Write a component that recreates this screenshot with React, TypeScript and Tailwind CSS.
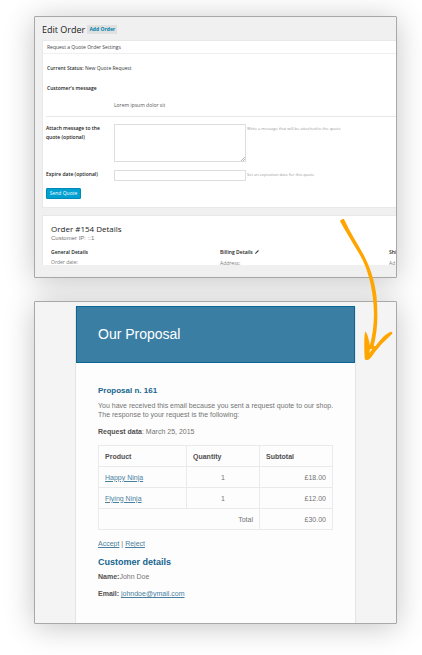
import type { ReactNode } from "react";

const card =
  "overflow-hidden rounded-[1px] border border-[#a8a8a8] shadow-[0_3px_30px_rgba(0,0,0,0.23)]";

function OrderForm() {
  return (
    <form className="border-y border-l border-[#e8e8e8] bg-white pb-2">
      <h2 className="border-b border-[#f0f0f0] pl-1 text-[5px] leading-[12px] text-[#444]">
        Request a Quote Order Settings
      </h2>
      <p className="mt-[9px] pl-1 text-[5px] leading-[10px] text-[#333]">
        <b className="font-semibold">Current Status:</b> New Quote Request
      </p>
      <h3 className="mt-[10px] pl-1 text-[5px] leading-[10px] font-semibold">Customer's message</h3>
      <p className="mt-[7px] pl-[71px] text-[5px] leading-[10px] text-[#555]">Lorem ipsum dolor sit</p>
      <hr className="mt-[6px] ml-[3px] border-[#e8e8e8]" />
      <div className="mt-[7px] flex items-start pl-[3px]">
        <label htmlFor="message" className="w-[68px] text-[5px] leading-[9px] font-semibold">
          Attach message to the
          <br />
          quote (optional)
        </label>
        <div className="relative">
          <textarea id="message" className="block h-[38px] w-[132px] resize-none border border-[#ddd] bg-white" />
          <svg viewBox="0 0 4 4" className="pointer-events-none absolute right-px bottom-px size-1">
            <path d="M0 4L4 0M2 4L4 2" stroke="#999" strokeWidth=".7" />
          </svg>
        </div>
        <span className="pl-px text-[4px] leading-[9px] text-[#999]">
          Write a message that will be attached to the quote
        </span>
      </div>
      <div className="mt-[8px] flex items-start pl-[3px]">
        <label htmlFor="expire" className="w-[68px] text-[5px] leading-[9px] font-semibold">
          Expire date (optional)
        </label>
        <input id="expire" type="text" className="block h-[11px] w-[132px] border border-[#ddd] bg-white text-[5px]" />
        <span className="pl-px text-[4px] leading-[10px] text-[#999]">
          Set an expiration date for this quote
        </span>
      </div>
      <button
        type="button"
        className="mt-[7px] ml-[3px] block h-[11px] w-[35px] rounded-[1px] border border-[#0089b3] bg-[#00a0d2] text-[5px] leading-[9px] text-white"
      >
        Send Quote
      </button>
    </form>
  );
}

function OrderCard() {
  return (
    <section className={`${card} bg-[#f0f0f0] pb-3 pl-[7px] font-['Open_Sans',sans-serif] text-[#222]`}>
      <header className="flex h-[23px] items-center gap-[2px] pt-[2px]">
        <h1 className="text-[9px] leading-[12px]">Edit Order</h1>
        <button type="button" className="h-[9px] w-[30px] bg-[#e0e0e0] text-[5px] leading-[9px] font-bold text-[#0083ab]">
          Add Order
        </button>
      </header>
      <OrderForm />
      <div className="mt-[7px] h-[50px] overflow-hidden border-t border-l border-[#e8e8e8] bg-white pl-[8px]">
        <h2 className="mt-[8px] text-[8px] leading-[10px]">Order #154 Details</h2>
        <p className="font-['Liberation_Sans',sans-serif] text-[6px] leading-[8px] text-[#777]">Customer IP: ::1</p>
        <div className="mt-[5px] grid grid-cols-[169px_169px_1fr] text-[5px] leading-[10px] whitespace-nowrap text-[#777]">
          <div>
            <h3 className="font-semibold text-[#222]">General Details</h3>
            <p>Order date:</p>
          </div>
          <div>
            <h3 className="flex items-center gap-[2px] font-semibold text-[#222]">
              Billing Details
              <svg viewBox="0 0 4 4" className="size-[4px]">
                <path d="M0 4L.4 2.8L3.1.1L3.9.9L1.2 3.6Z" fill="#444" />
              </svg>
            </h3>
            <p className="mt-px">Address:</p>
          </div>
          <div>
            <h3 className="font-semibold text-[#222]">Shi</h3>
            <p className="mt-px">Ad</p>
          </div>
        </div>
      </div>
    </section>
  );
}

function MailLink({ href, children }: { href: string; children: ReactNode }) {
  return (
    <a href={href} className="text-[#4b7f9f] underline">
      {children}
    </a>
  );
}

const items = [
  { name: "Happy Ninja", quantity: 1, subtotal: "£18.00" },
  { name: "Flying Ninja", quantity: 1, subtotal: "£12.00" },
];
const cell = "h-[21px] border border-[#eaeaea] px-[6px]";

function ProposalCard() {
  return (
    <section className={`${card} mt-[23px] bg-[#f4f4f4] pt-[4px] font-['Liberation_Sans',sans-serif]`}>
      <div className="mx-auto w-[281px] rounded-t-[2px] border-x border-[#e4e4e4] bg-[#fdfdfd]">
        <header className="flex h-[57px] items-center border border-[#086795] bg-[#3b7ea4] px-[21px] pb-px">
          <h1 className="text-[14px] leading-[18px] text-white">Our Proposal</h1>
        </header>
        <div className="px-[22px] pb-[25px] text-[7px] leading-[9px] text-[#747474]">
          <h2 className="mt-[23px] text-[8px] leading-[10px] font-bold text-[#16648f]">Proposal n. 161</h2>
          <p className="mt-[5px] whitespace-nowrap">
            You have received this email because you sent a request quote to our shop.
            <br />
            The response to your request is the following:
          </p>
          <p className="mt-[8px]">
            <b className="text-[#505050]">Request data</b>: March 25, 2015
          </p>
          <table className="mt-[9px] w-full table-fixed border-collapse">
            <colgroup>
              <col className="w-[88px]" />
              <col className="w-[73px]" />
              <col />
            </colgroup>
            <thead className="text-left text-[#505050]">
              <tr>
                <th className={cell}>Product</th>
                <th className={cell}>Quantity</th>
                <th className={cell}>Subtotal</th>
              </tr>
            </thead>
            <tbody>
              {items.map((item) => (
                <tr key={item.name}>
                  <td className={cell}>
                    <MailLink href="#product">{item.name}</MailLink>
                  </td>
                  <td className={`${cell} text-center`}>{item.quantity}</td>
                  <td className={`${cell} text-right`}>{item.subtotal}</td>
                </tr>
              ))}
              <tr>
                <td colSpan={2} className={`${cell} text-right`}>Total</td>
                <td className={`${cell} text-right`}>£30.00</td>
              </tr>
            </tbody>
          </table>
          <p className="mt-[9px]">
            <MailLink href="#accept">Accept</MailLink> | <MailLink href="#reject">Reject</MailLink>
          </p>
          <h2 className="mt-[9px] text-[9px] leading-[10px] font-bold text-[#16648f]">Customer details</h2>
          <p className="mt-[5px]">
            <b className="text-[#505050]">Name:</b>John Doe
          </p>
          <p className="mt-[8px]">
            <b className="text-[#505050]">Email:</b> <MailLink href="mailto:johndoe@ymail.com">johndoe@ymail.com</MailLink>
          </p>
        </div>
      </div>
    </section>
  );
}

function Arrow() {
  return (
    <svg
      viewBox="0 0 56 144"
      className="pointer-events-none absolute top-[218px] right-[28px] h-[144px] w-[56px]"
      fill="#ffa500"
      fillRule="evenodd"
    >
      <path d="M2 3C9 16 15 25 22.500 38C29 50 33 64 34.800 79C37 97 36 112 31.500 129L35.500 128.500C40 112 40 96 38.500 78C36.500 62 32 49 26 37.500C19 25 12 14 6 1C4.500 1 3 1.500 2 3Z" />
      <path d="M27 113.500C25.800 122 26.300 132 26.700 140C27 142 28 142.300 29.500 142C33 141 35 136 38 132.700L43.700 126L54 116C55 114.500 54 113.500 52.500 114C50 114.500 47.500 117 45.300 118.700C42 122 40 125 37.500 128L32 128C31.500 124 30 118 28.500 115ZM31.800 131.500L34.500 130.500L31.500 135Z" />
    </svg>
  );
}

export default function App() {
  return (
    <main className="relative overflow-hidden bg-white pt-4 pr-[25px] pb-[31px] pl-[34px]">
      <OrderCard />
      <ProposalCard />
      <Arrow />
    </main>
  );
}
